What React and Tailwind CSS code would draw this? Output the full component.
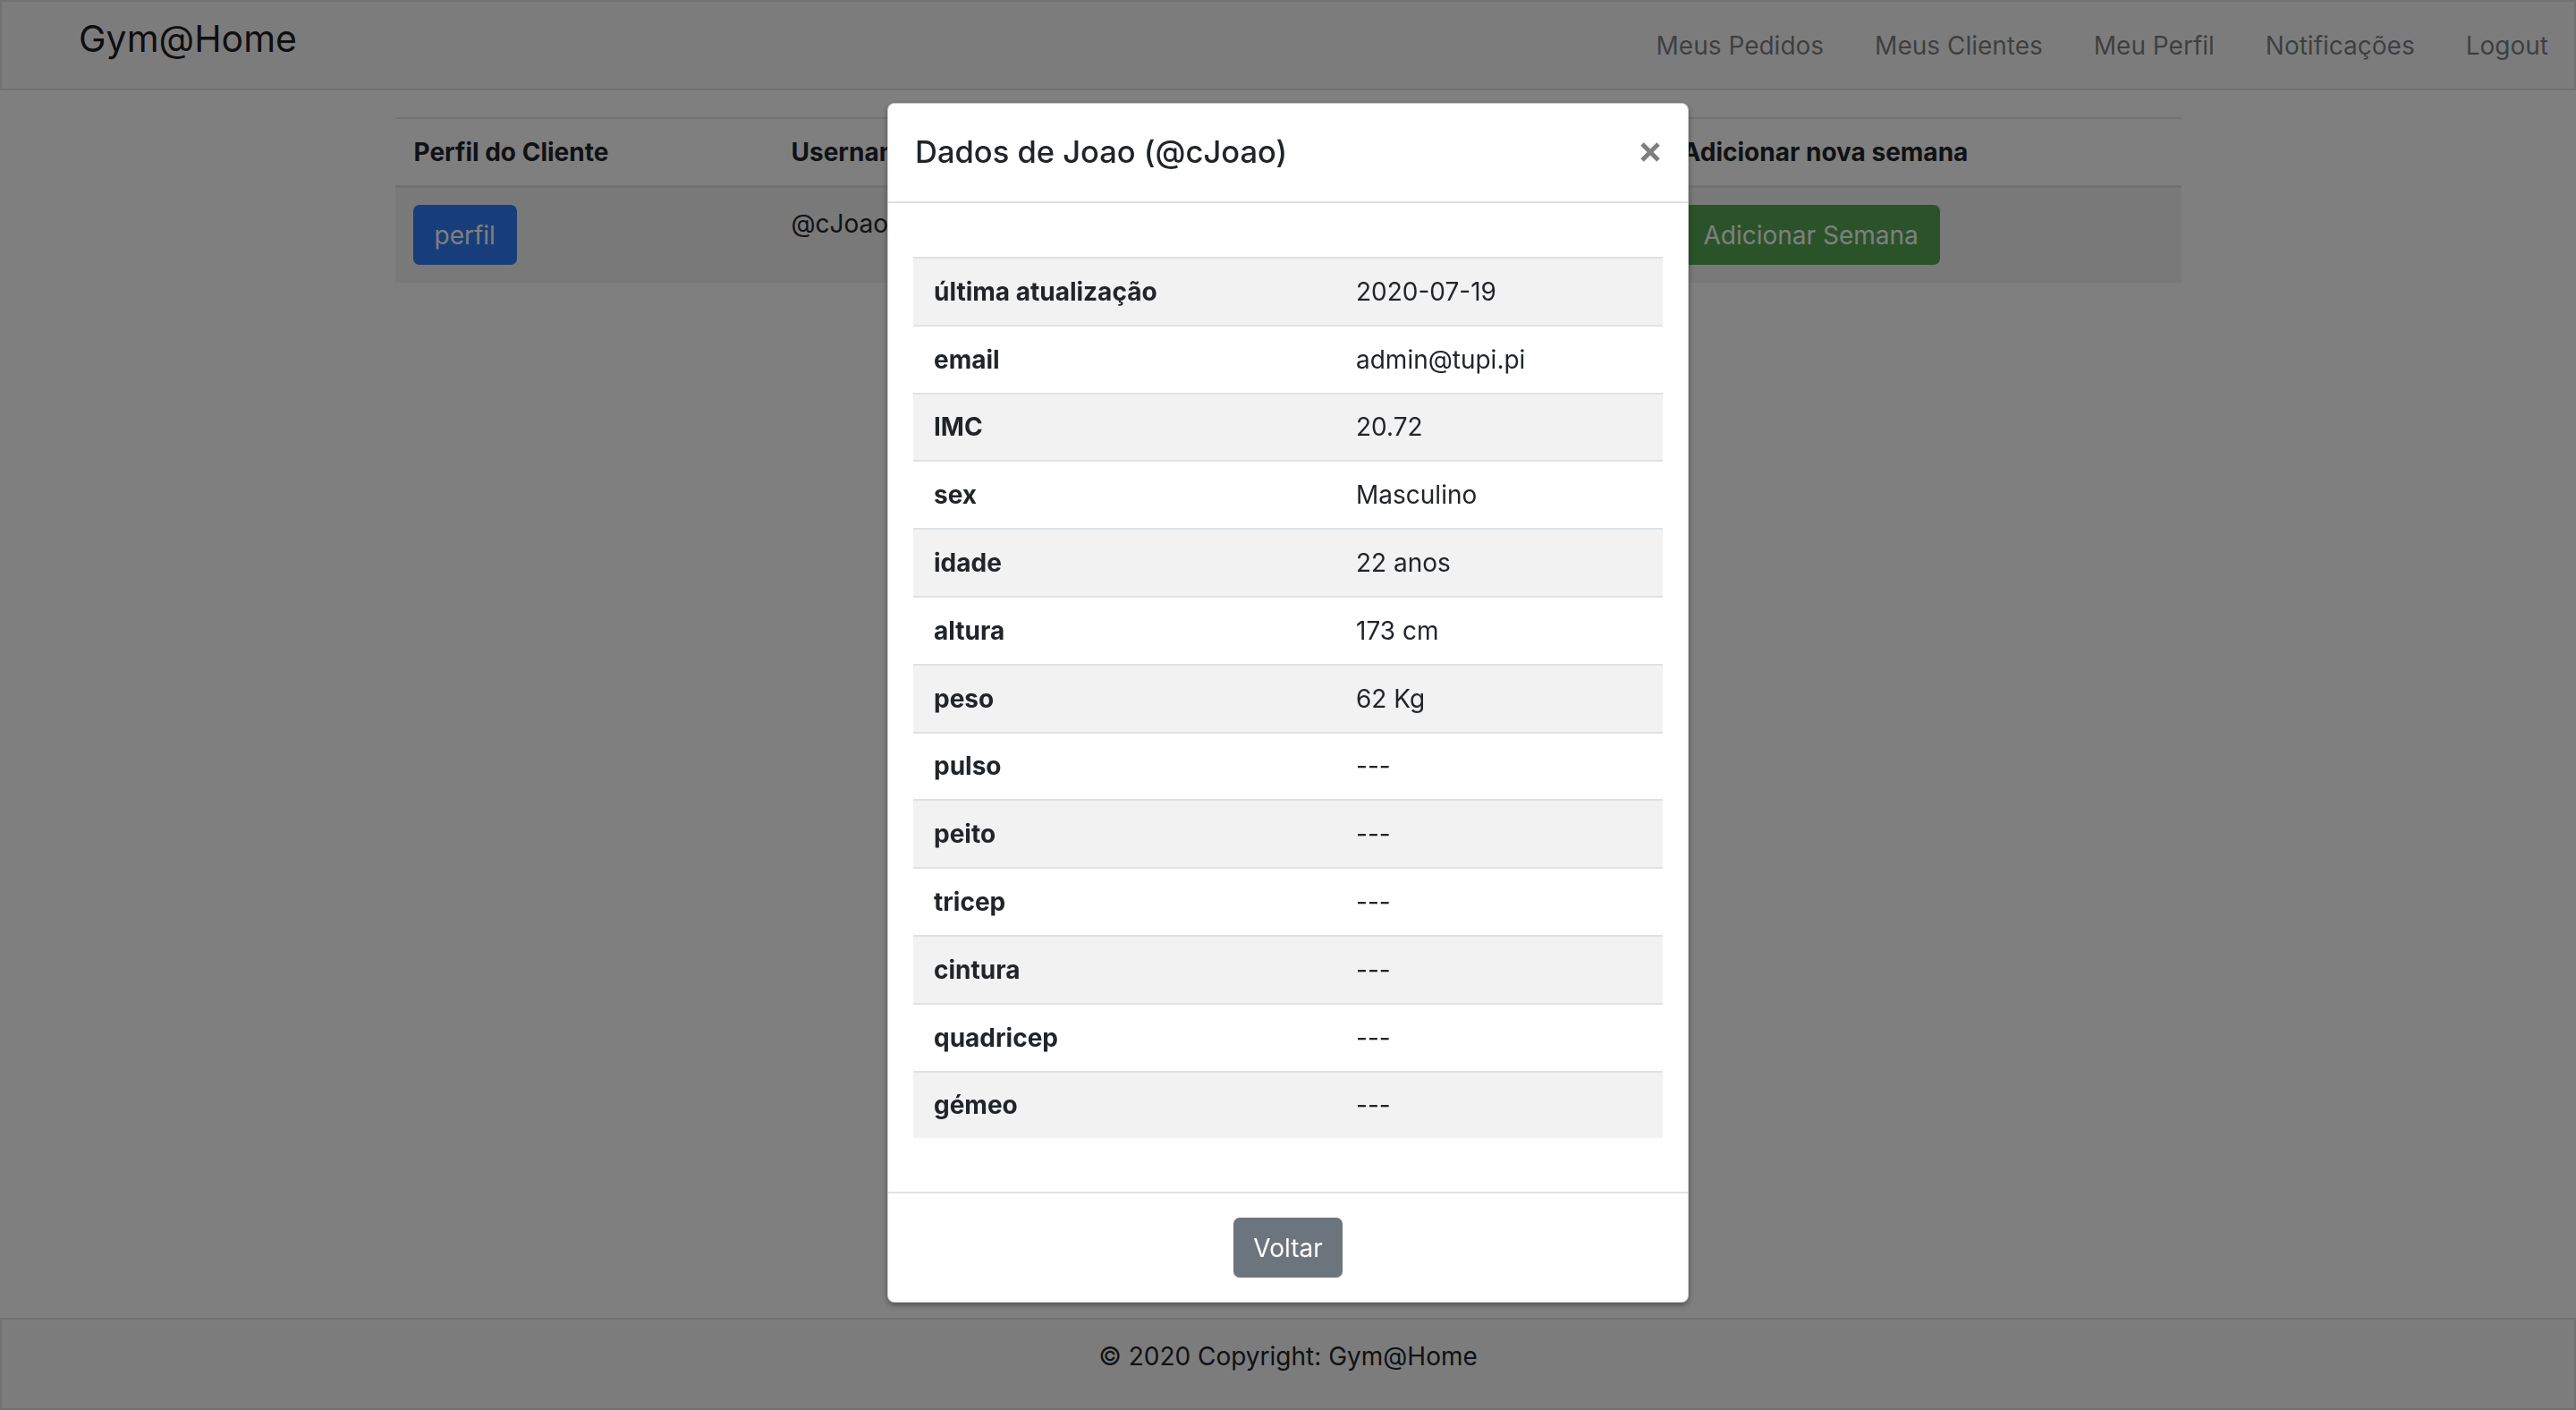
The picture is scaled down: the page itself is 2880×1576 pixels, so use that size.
import React from "react";

const rows = [
  ["última atualização", "2020-07-19"],
  ["email", "admin@tupi.pi"],
  ["IMC", "20.72"],
  ["sex", "Masculino"],
  ["idade", "22 anos"],
  ["altura", "173 cm"],
  ["peso", "62 Kg"],
  ["pulso", "---"],
  ["peito", "---"],
  ["tricep", "---"],
  ["cintura", "---"],
  ["quadricep", "---"],
  ["gémeo", "---"],
];

const links = ["Meus Pedidos", "Meus Clientes", "Meu Perfil", "Notificações", "Logout"];

export default function App() {
  return (
    <div className="relative min-h-screen flex flex-col bg-white font-['Inter',sans-serif] text-[#212529]">
      <nav className="h-[101px] flex items-center justify-between bg-[#f8f9fa] border-2 border-[#dee2e6] pl-[86px] pr-[29px]">
        <a className="self-start mt-[21px] text-[41px] leading-[41px] text-black/90">Gym@Home</a>
        <div className="flex items-center gap-[57px]">
          {links.map((l) => (
            <a key={l} className="text-[28px] leading-[42px] text-black/50">
              {l}
            </a>
          ))}
        </div>
      </nav>

      <main className="flex-1 pt-[30px]">
        <div className="w-[1997px] mx-auto text-[28px] leading-[42px]">
          <div className="grid grid-cols-[422px_498px_498px_579px] border-t-2 border-b-[3px] border-[#dee2e6] font-bold">
            <div className="px-[21px] py-[16px]">Perfil do Cliente</div>
            <div className="px-[21px] py-[16px] overflow-hidden whitespace-nowrap">Username</div>
            <div className="px-[21px] py-[16px]">Nome</div>
            <div className="px-[21px] py-[16px]">Adicionar nova semana</div>
          </div>
          <div className="grid grid-cols-[422px_498px_498px_579px] bg-black/5">
            <div className="px-[20px] pt-[19px] pb-[20px]">
              <button className="h-[67px] px-[24px] rounded-[7px] bg-[#2f7cf6] text-white flex items-center">perfil</button>
            </div>
            <div className="px-[21px] pt-[19px]">@cJoao</div>
            <div className="px-[21px] pt-[19px]">Joao</div>
            <div className="px-[21px] pt-[19px]">
              <button className="h-[67px] px-[24px] rounded-[7px] bg-[#55a653] text-white flex items-center">Adicionar Semana</button>
            </div>
          </div>
        </div>
      </main>

      <footer className="h-[103px] bg-[#f8f9fa] border-2 border-[#dee2e6] pt-[20px] text-center text-[28px] leading-[42px]">
        © 2020 Copyright: Gym@Home
      </footer>

      <div className="fixed inset-0 z-50 bg-black/50">
        <div className="mt-[115px] mx-auto w-[896px] bg-white border border-black/20 rounded-[8px] shadow-[0_3px_6px_rgba(0,0,0,0.35)] overflow-hidden">
          <div className="h-[111px] flex items-start justify-between px-[30px] border-b-2 border-[#dee2e6]">
            <h5 className="mt-[28px] text-[34.5px] leading-[52px] font-medium">Dados de Joao (@cJoao)</h5>
            <button className="mt-[42px]" aria-label="Close">
              <svg width="24" height="24" viewBox="0 0 24 24" className="block">
                <path d="M3 3 L21 21 M21 3 L3 21" stroke="#000" strokeOpacity="0.5" strokeWidth="5" strokeLinecap="butt" />
              </svg>
            </button>
          </div>
          <div className="px-[28px] py-[60px]">
            <div className="text-[28px] leading-[42px]">
              {rows.map(([k, v], i) => (
                <div
                  key={k}
                  className={
                    i % 2 === 0
                      ? "h-[75.8px] grid grid-cols-[471px_1fr] items-center border-t-2 border-[#dee2e6] bg-[#f2f2f2]"
                      : "h-[75.8px] grid grid-cols-[471px_1fr] items-center border-t-2 border-[#dee2e6] bg-white"
                  }
                >
                  <div className="px-[23px] font-bold">{k}</div>
                  <div className="px-[24px]">{v}</div>
                </div>
              ))}
            </div>
          </div>
          <div className="h-[123px] flex items-center justify-center border-t-2 border-[#dee2e6]">
            <button className="w-[122px] h-[67px] rounded-[7px] bg-[#6c757d] text-white text-[28px] leading-[42px] flex items-center justify-center">
              Voltar
            </button>
          </div>
        </div>
      </div>
    </div>
  );
}
